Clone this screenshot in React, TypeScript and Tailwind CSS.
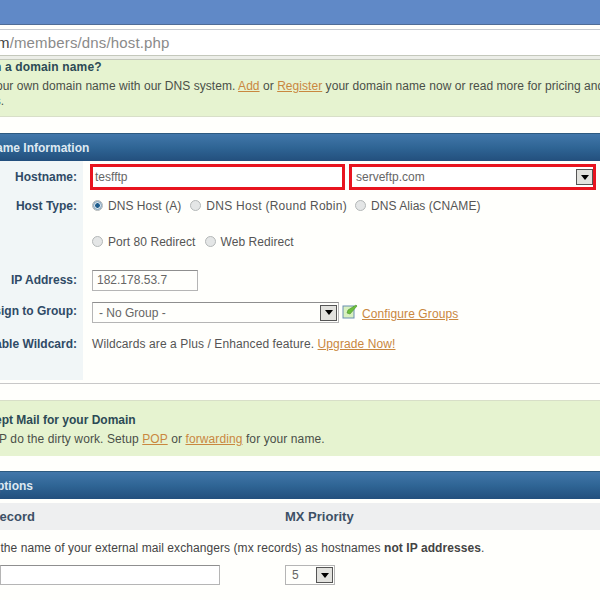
import React from 'react';

const link = 'text-[#c9873f] underline';

const Radio = ({checked, label, wide}: {checked?: boolean, label: string, wide?: boolean}) => (
	<span className={`flex items-center gap-[5px] whitespace-nowrap ${wide ? 'tracking-[0.27px]' : 'tracking-[0.05px]'}`}>
		<span className="flex h-[11px] w-[11px] items-center justify-center rounded-full border border-[#b4b8b8] bg-[#e4e6e6]">
			{checked && <span className="h-[7px] w-[7px] rounded-full border border-white bg-[#1d5c8c] outline outline-[#7ba0bc]" />}
		</span>
		{label}
	</span>
);

const Arrow = () => (
	<span className="flex h-[16px] w-[17px] shrink-0 items-center justify-center border border-[#555] bg-[#e2e2de]">
		<span className="h-0 w-0 border-x-[4px] border-t-[5px] border-x-transparent border-t-black" />
	</span>
);

const Row = ({label, height, top, children}: {label?: string, height: string, top?: boolean, children: React.ReactNode}) => (
	<div className={`flex ${height}`}>
		<div className={`flex w-[83px] shrink-0 justify-end whitespace-nowrap bg-[#f1f6f7] pr-[6px] font-bold text-[#2f4a66] ${top ? 'items-start pt-[10px]' : 'items-center'}`}>
			{label}
		</div>
		<div className={`flex min-w-0 flex-1 pl-[9px] ${top ? 'items-start pt-[10px]' : 'items-center'}`}>{children}</div>
	</div>
);

const Header = ({children}: {children: React.ReactNode}) => (
	<div className="flex h-[28px] items-center whitespace-nowrap border-t border-[#2d5a80] bg-gradient-to-b from-[#4277aa] via-[#2f6595] to-[#234f7d] font-bold text-[#dfe9f2]">
		{children}
	</div>
);

export default function App() {
	return (
		<div className="h-[600px] w-[600px] overflow-hidden bg-[#fffffc] text-[12px] text-[#555] [font-family:'Liberation_Sans',Arial,sans-serif]">
			<div className="h-[25px] border-b border-[#4f6c96] bg-[#6089c7]" />
			<div className="mt-[4px] flex h-[26px] items-center whitespace-nowrap border-t border-[#c8ccd2] bg-white pt-[2px] text-[15px] tracking-[0.15px] text-[#8a8a8a]">
				<span className="-ml-[3px] text-[#444]">m</span>/members/dns/host.php
			</div>
			<div className="h-[5px] border-y border-[#c4c8bc] bg-[#eceee8]" />

			<div className="h-[57px] overflow-hidden whitespace-nowrap border-b border-[#d8dfc8] bg-[#e6f3d0] leading-[14px]">
				<div className="-ml-[25px] font-bold tracking-[0.15px] text-[#2c4a55]">Own a domain name?</div>
				<div className="-ml-[35px] mt-[5px] tracking-[0.05px] text-[#4a4f48]">
					Use your own domain name with our DNS system. <a className={link}>Add</a> or <a className={link}>Register</a> your domain name now or read more for pricing and
				</div>
				<div className="-ml-[38px] mt-[1px] text-[#4a4f48]">options.</div>
			</div>

			<div className="mt-[16px]">
				<Header><span className="-ml-[60px]">Domain Name Information</span></Header>
				<div className="flex h-[30px]">
					<div className="flex w-[83px] shrink-0 items-center justify-end bg-[#f1f6f7] pr-[6px] pt-[1px] font-bold text-[#2f4a66]">Hostname:</div>
					<div className="flex flex-1 items-start gap-[4px] pl-[7px] pt-[3px]">
						<div className="flex h-[26px] w-[255px] items-center border-[3px] border-[#e8141f] bg-white pl-[2px] text-[#666]">tesfftp</div>
						<div className="flex h-[26px] w-[247px] items-center justify-between border-[3px] border-[#e8141f] bg-white pl-[4px] text-[#666]">
							serveftp.com
							<Arrow />
						</div>
					</div>
				</div>
				<Row label="Host Type:" height="h-[29px]">
					<div className="flex">
						<Radio checked label="DNS Host (A)" />
						<span className="w-[9px]" />
						<Radio wide label="DNS Host (Round Robin)" />
						<span className="w-[8px]" />
						<Radio label="DNS Alias (CNAME)" />
					</div>
				</Row>
				<Row height="h-[43px]">
					<div className="flex gap-[9px]">
						<Radio label="Port 80 Redirect" />
						<Radio label="Web Redirect" />
					</div>
				</Row>
				<Row label="IP Address:" height="h-[34px]">
					<div className="flex h-[21px] w-[106px] items-center border border-[#b5b5b5] border-t-[#8f8f8f] pl-[4px] text-[#666]">182.178.53.7</div>
				</Row>
				<div className="flex h-[28px]">
					<div className="flex w-[83px] shrink-0 items-center justify-end whitespace-nowrap bg-[#f1f6f7] pr-[6px] font-bold text-[#2f4a66]">Assign to Group:</div>
					<div className="flex flex-1 items-start pl-[9px] pt-[5px]">
						<div className="flex h-[21px] w-[247px] items-center justify-between border border-[#b5b5b5] border-t-[#8f8f8f] pl-[6px] pr-[1px] text-[#666]">
							- No Group -
							<Arrow />
						</div>
						<svg className="ml-[3px] mt-[2px]" width="16" height="15" viewBox="0 0 16 15">
							<rect x="1" y="2" width="11" height="12" fill="#d8f0c0" stroke="#6a8fb0" />
							<path d="M5 9 L6 6 L14 1 L15 2 L8 10 Z" fill="#6cbf3c" stroke="#4a8f2a" strokeWidth="0.6" />
						</svg>
						<a className={`${link} ml-[4px] mt-[3px] whitespace-nowrap tracking-[0.1px]`}>Configure Groups</a>
					</div>
				</div>
				<Row label="Enable Wildcard:" height="h-[55px]" top>
					<div className="whitespace-nowrap tracking-[0.1px]">
						Wildcards are a Plus / Enhanced feature. <a className={link}>Upgrade Now!</a>
					</div>
				</Row>
				<div className="h-[4px] border-b border-[#c8c8c8]" />
			</div>

			<div className="mt-[16px] h-[56px] overflow-hidden whitespace-nowrap border-t border-[#d8dfc8] bg-[#e6f3d0]">
				<div className="-ml-[27px] mt-[10px] font-bold text-[#2c4a55]">Accept Mail for your Domain</div>
				<div className="-ml-[47px] mt-[1px] tracking-[0.1px] text-[#4a4f48]">
					Let SMTP do the dirty work. Setup <a className={link}>POP</a> or <a className={link}>forwarding</a> for your name.
				</div>
			</div>

			<div className="mt-[15px]">
				<Header><span className="-ml-[39px]">Mail Options</span></Header>
			</div>
			<div className="mt-[4px] flex h-[27px] items-center whitespace-nowrap bg-[#eeeff0] text-[13px] font-bold text-[#3d5066]">
				<span className="-ml-[33px] w-[318px] shrink-0">MX Record</span>
				MX Priority
			</div>
			<div className="-ml-[32px] mt-[9px] whitespace-nowrap tracking-[0.07px] text-[#444]">
				Enter the name of your external mail exchangers (mx records) as hostnames <b>not IP addresses</b>.
			</div>
			<div className="mt-[8px] flex items-center">
				<div className="h-[20px] w-[220px] border border-[#b5b5b5] border-t-[#8f8f8f] bg-white" />
				<div className="ml-[65px] flex h-[20px] w-[50px] items-center justify-between border border-[#b5b5b5] pl-[6px] pr-[1px] text-[#666]">
					5
					<Arrow />
				</div>
			</div>
		</div>
	);
}
